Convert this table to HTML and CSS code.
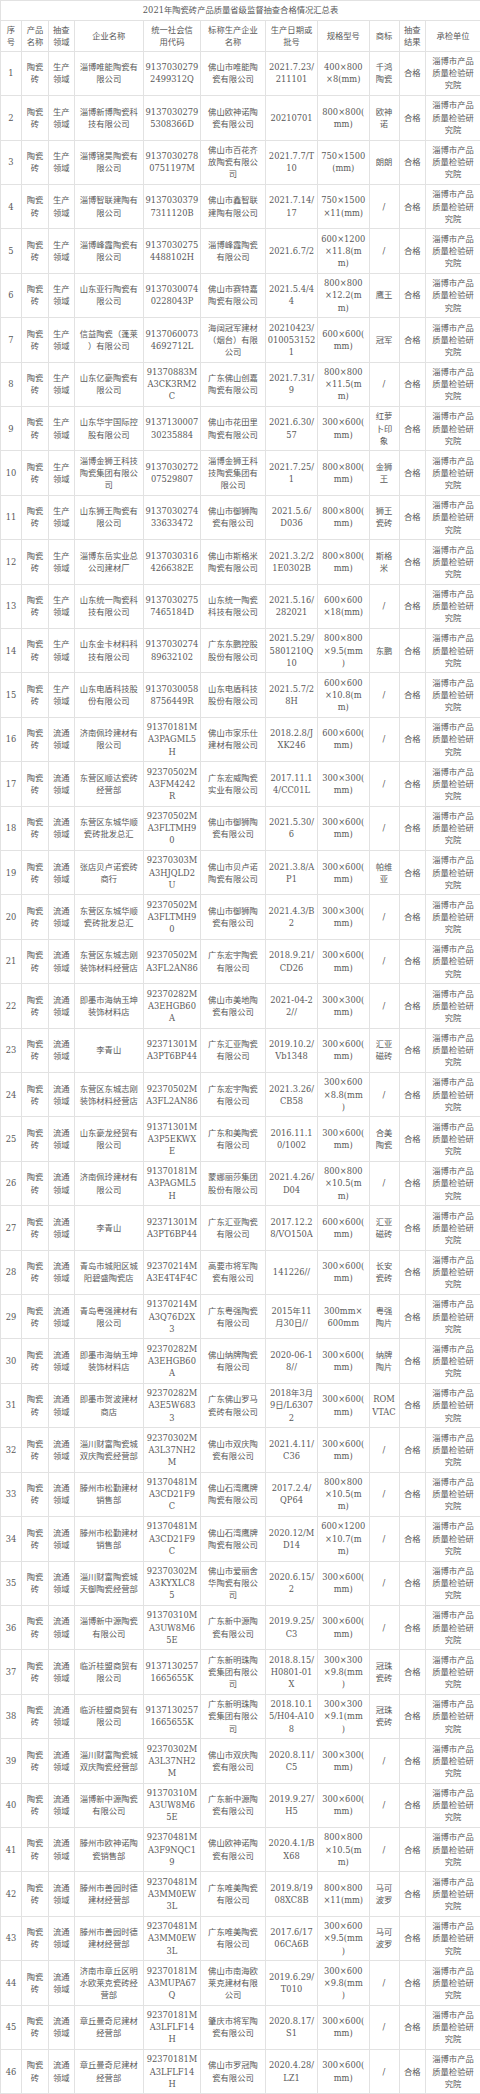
FILE: index.html
```html
<!DOCTYPE html>
<html lang="zh-CN">
<head>
<meta charset="utf-8">
<title>2021年陶瓷砖产品质量省级监督抽查合格情况汇总表</title>
<link rel="stylesheet" href="styles.css">
</head>
<body>
<table class="sheet">
<colgroup>
<col class="c1"><col class="c2"><col class="c3"><col class="c4"><col class="c5"><col class="c6"><col class="c7"><col class="c8"><col class="c9"><col class="c10"><col class="c11">
</colgroup>
<tbody>
<tr class="t"><td colspan="11">2021年陶瓷砖产品质量省级监督抽查合格情况汇总表</td></tr>
<tr class="h"><td>序<br>号</td><td>产品<br>名称</td><td>抽查<br>领域</td><td>企业名称</td><td>统一社会信<br>用代码</td><td>标称生产企业<br>名称</td><td>生产日期或<br>批号</td><td>规格型号</td><td>商标</td><td>抽查<br>结果</td><td>承检单位</td></tr>
<tr class="r"><td>1</td><td>陶瓷<br>砖</td><td>生产<br>领域</td><td>淄博唯能陶瓷有<br>限公司</td><td>9137030279<br>2499312Q</td><td>佛山市唯能陶<br>瓷有限公司</td><td>2021.7.23/<br>211101</td><td>400×800<br>×8(mm)</td><td>千鸿<br>陶瓷</td><td>合格</td><td>淄博市产品<br>质量检验研<br>究院</td></tr>
<tr class="r"><td>2</td><td>陶瓷<br>砖</td><td>生产<br>领域</td><td>淄博新博陶瓷科<br>技有限公司</td><td>9137030279<br>5308366D</td><td>佛山欧神诺陶<br>瓷有限公司</td><td>20210701</td><td>800×800(<br>mm)</td><td>欧神<br>诺</td><td>合格</td><td>淄博市产品<br>质量检验研<br>究院</td></tr>
<tr class="r"><td>3</td><td>陶瓷<br>砖</td><td>生产<br>领域</td><td>淄博锦昊陶瓷有<br>限公司</td><td>9137030278<br>0751197M</td><td>佛山市百花齐<br>放陶瓷有限公<br>司</td><td>2021.7.7/T<br>10</td><td>750×1500<br>(mm)</td><td>朗朗</td><td>合格</td><td>淄博市产品<br>质量检验研<br>究院</td></tr>
<tr class="r"><td>4</td><td>陶瓷<br>砖</td><td>生产<br>领域</td><td>淄博智联建陶有<br>限公司</td><td>9137030379<br>7311120B</td><td>佛山市鑫智联<br>建陶有限公司</td><td>2021.7.14/<br>17</td><td>750×1500<br>×11(mm)</td><td>/</td><td>合格</td><td>淄博市产品<br>质量检验研<br>究院</td></tr>
<tr class="r"><td>5</td><td>陶瓷<br>砖</td><td>生产<br>领域</td><td>淄博峰霞陶瓷有<br>限公司</td><td>9137030275<br>4488102H</td><td>淄博峰霞陶瓷<br>有限公司</td><td>2021.6.7/2</td><td>600×1200<br>×11.8(m<br>m)</td><td>/</td><td>合格</td><td>淄博市产品<br>质量检验研<br>究院</td></tr>
<tr class="r"><td>6</td><td>陶瓷<br>砖</td><td>生产<br>领域</td><td>山东亚行陶瓷有<br>限公司</td><td>9137030074<br>0228043P</td><td>佛山市赛特嘉<br>陶瓷有限公司</td><td>2021.5.4/4<br>4</td><td>800×800<br>×12.2(m<br>m)</td><td>鹰王</td><td>合格</td><td>淄博市产品<br>质量检验研<br>究院</td></tr>
<tr class="r"><td>7</td><td>陶瓷<br>砖</td><td>生产<br>领域</td><td>信益陶瓷（蓬莱<br>）有限公司</td><td>9137060073<br>4692712L</td><td>海阔冠军建材<br>（烟台）有限<br>公司</td><td>20210423/<br>010053152<br>1</td><td>600×600(<br>mm)</td><td>冠军</td><td>合格</td><td>淄博市产品<br>质量检验研<br>究院</td></tr>
<tr class="r"><td>8</td><td>陶瓷<br>砖</td><td>生产<br>领域</td><td>山东亿豪陶瓷有<br>限公司</td><td>91370883M<br>A3CK3RM2<br>C</td><td>广东佛山创嘉<br>陶瓷有限公司</td><td>2021.7.31/<br>9</td><td>800×800<br>×11.5(m<br>m)</td><td>/</td><td>合格</td><td>淄博市产品<br>质量检验研<br>究院</td></tr>
<tr class="r"><td>9</td><td>陶瓷<br>砖</td><td>生产<br>领域</td><td>山东华宇国际控<br>股有限公司</td><td>9137130007<br>30235884</td><td>佛山市花田里<br>陶瓷有限公司</td><td>2021.6.30/<br>57</td><td>300×600(<br>mm)</td><td>红萝<br>卜印<br>象</td><td>合格</td><td>淄博市产品<br>质量检验研<br>究院</td></tr>
<tr class="r"><td>10</td><td>陶瓷<br>砖</td><td>生产<br>领域</td><td>淄博金狮王科技<br>陶瓷集团有限公<br>司</td><td>9137030272<br>07529807</td><td>淄博金狮王科<br>技陶瓷集团有<br>限公司</td><td>2021.7.25/<br>1</td><td>800×800(<br>mm)</td><td>金狮<br>王</td><td>合格</td><td>淄博市产品<br>质量检验研<br>究院</td></tr>
<tr class="r"><td>11</td><td>陶瓷<br>砖</td><td>生产<br>领域</td><td>山东狮王陶瓷有<br>限公司</td><td>9137030274<br>33633472</td><td>佛山市御狮陶<br>瓷有限公司</td><td>2021.5.6/<br>D036</td><td>800×800(<br>mm)</td><td>狮王<br>瓷砖</td><td>合格</td><td>淄博市产品<br>质量检验研<br>究院</td></tr>
<tr class="r"><td>12</td><td>陶瓷<br>砖</td><td>生产<br>领域</td><td>淄博东岳实业总<br>公司建材厂</td><td>9137030316<br>4266382E</td><td>佛山市斯格米<br>陶瓷有限公司</td><td>2021.3.2/2<br>1E0302B</td><td>800×800(<br>mm)</td><td>斯格<br>米</td><td>合格</td><td>淄博市产品<br>质量检验研<br>究院</td></tr>
<tr class="r"><td>13</td><td>陶瓷<br>砖</td><td>生产<br>领域</td><td>山东统一陶瓷科<br>技有限公司</td><td>9137030275<br>7465184D</td><td>山东统一陶瓷<br>科技有限公司</td><td>2021.5.16/<br>282021</td><td>600×600<br>×18(mm)</td><td>/</td><td>合格</td><td>淄博市产品<br>质量检验研<br>究院</td></tr>
<tr class="r"><td>14</td><td>陶瓷<br>砖</td><td>生产<br>领域</td><td>山东金卡材料科<br>技有限公司</td><td>9137030274<br>89632102</td><td>广东东鹏控股<br>股份有限公司</td><td>2021.5.29/<br>5801210Q<br>10</td><td>800×800<br>×9.5(mm<br>)</td><td>东鹏</td><td>合格</td><td>淄博市产品<br>质量检验研<br>究院</td></tr>
<tr class="r"><td>15</td><td>陶瓷<br>砖</td><td>生产<br>领域</td><td>山东电盾科技股<br>份有限公司</td><td>9137030058<br>8756449R</td><td>山东电盾科技<br>股份有限公司</td><td>2021.5.7/2<br>8H</td><td>600×600<br>×10.8(m<br>m)</td><td>/</td><td>合格</td><td>淄博市产品<br>质量检验研<br>究院</td></tr>
<tr class="r"><td>16</td><td>陶瓷<br>砖</td><td>流通<br>领域</td><td>济南佩玲建材有<br>限公司</td><td>91370181M<br>A3PAGML5<br>H</td><td>佛山市家乐仕<br>建材有限公司</td><td>2018.2.8/J<br>XK246</td><td>600×600(<br>mm)</td><td>/</td><td>合格</td><td>淄博市产品<br>质量检验研<br>究院</td></tr>
<tr class="r"><td>17</td><td>陶瓷<br>砖</td><td>流通<br>领域</td><td>东营区顺达瓷砖<br>经营部</td><td>92370502M<br>A3FM4242<br>R</td><td>广东宏威陶瓷<br>实业有限公司</td><td>2017.11.1<br>4/CC01L</td><td>300×300(<br>mm)</td><td>/</td><td>合格</td><td>淄博市产品<br>质量检验研<br>究院</td></tr>
<tr class="r"><td>18</td><td>陶瓷<br>砖</td><td>流通<br>领域</td><td>东营区东城华顺<br>瓷砖批发总汇</td><td>92370502M<br>A3FLTMH9<br>0</td><td>佛山市御狮陶<br>瓷有限公司</td><td>2021.5.30/<br>6</td><td>300×600(<br>mm)</td><td>/</td><td>合格</td><td>淄博市产品<br>质量检验研<br>究院</td></tr>
<tr class="r"><td>19</td><td>陶瓷<br>砖</td><td>流通<br>领域</td><td>张店贝卢诺瓷砖<br>商行</td><td>92370303M<br>A3HJQLD2<br>U</td><td>佛山市贝卢诺<br>陶瓷有限公司</td><td>2021.3.8/A<br>P1</td><td>300×600(<br>mm)</td><td>帕维<br>亚</td><td>合格</td><td>淄博市产品<br>质量检验研<br>究院</td></tr>
<tr class="r"><td>20</td><td>陶瓷<br>砖</td><td>流通<br>领域</td><td>东营区东城华顺<br>瓷砖批发总汇</td><td>92370502M<br>A3FLTMH9<br>0</td><td>佛山市御狮陶<br>瓷有限公司</td><td>2021.4.3/B<br>2</td><td>300×300(<br>mm)</td><td>/</td><td>合格</td><td>淄博市产品<br>质量检验研<br>究院</td></tr>
<tr class="r"><td>21</td><td>陶瓷<br>砖</td><td>流通<br>领域</td><td>东营区东城志刚<br>装饰材料经营店</td><td>92370502M<br>A3FL2AN86</td><td>广东宏宇陶瓷<br>有限公司</td><td>2018.9.21/<br>CD26</td><td>300×600(<br>mm)</td><td>/</td><td>合格</td><td>淄博市产品<br>质量检验研<br>究院</td></tr>
<tr class="r"><td>22</td><td>陶瓷<br>砖</td><td>流通<br>领域</td><td>即墨市海纳玉坤<br>装饰材料店</td><td>92370282M<br>A3EHGB60<br>A</td><td>佛山市美地陶<br>瓷有限公司</td><td>2021-04-2<br>2//</td><td>300×300(<br>mm)</td><td>/</td><td>合格</td><td>淄博市产品<br>质量检验研<br>究院</td></tr>
<tr class="r"><td>23</td><td>陶瓷<br>砖</td><td>流通<br>领域</td><td>李青山</td><td>92371301M<br>A3PT6BP44</td><td>广东汇亚陶瓷<br>有限公司</td><td>2019.10.2/<br>Vb1348</td><td>300×600(<br>mm)</td><td>汇亚<br>磁砖</td><td>合格</td><td>淄博市产品<br>质量检验研<br>究院</td></tr>
<tr class="r"><td>24</td><td>陶瓷<br>砖</td><td>流通<br>领域</td><td>东营区东城志刚<br>装饰材料经营店</td><td>92370502M<br>A3FL2AN86</td><td>广东宏宇陶瓷<br>有限公司</td><td>2021.3.26/<br>CB58</td><td>300×600<br>×8.8(mm<br>)</td><td>/</td><td>合格</td><td>淄博市产品<br>质量检验研<br>究院</td></tr>
<tr class="r"><td>25</td><td>陶瓷<br>砖</td><td>流通<br>领域</td><td>山东豪龙经贸有<br>限公司</td><td>91371301M<br>A3P5EKWX<br>E</td><td>广东和美陶瓷<br>有限公司</td><td>2016.11.1<br>0/1002</td><td>300×600(<br>mm)</td><td>合美<br>陶瓷</td><td>合格</td><td>淄博市产品<br>质量检验研<br>究院</td></tr>
<tr class="r"><td>26</td><td>陶瓷<br>砖</td><td>流通<br>领域</td><td>济南佩玲建材有<br>限公司</td><td>91370181M<br>A3PAGML5<br>H</td><td>蒙娜丽莎集团<br>股份有限公司</td><td>2021.4.26/<br>D04</td><td>800×800<br>×10.5(m<br>m)</td><td>/</td><td>合格</td><td>淄博市产品<br>质量检验研<br>究院</td></tr>
<tr class="r"><td>27</td><td>陶瓷<br>砖</td><td>流通<br>领域</td><td>李青山</td><td>92371301M<br>A3PT6BP44</td><td>广东汇亚陶瓷<br>有限公司</td><td>2017.12.2<br>8/VO150A</td><td>600×600(<br>mm)</td><td>汇亚<br>磁砖</td><td>合格</td><td>淄博市产品<br>质量检验研<br>究院</td></tr>
<tr class="r"><td>28</td><td>陶瓷<br>砖</td><td>流通<br>领域</td><td>青岛市城阳区城<br>阳碧盛陶瓷店</td><td>92370214M<br>A3E4T4F4C</td><td>高要市将军陶<br>瓷有限公司</td><td>141226//</td><td>300×600(<br>mm)</td><td>长安<br>瓷砖</td><td>合格</td><td>淄博市产品<br>质量检验研<br>究院</td></tr>
<tr class="r"><td>29</td><td>陶瓷<br>砖</td><td>流通<br>领域</td><td>青岛粤强建材有<br>限公司</td><td>91370214M<br>A3Q76D2X<br>3</td><td>广东粤强陶瓷<br>有限公司</td><td>2015年11<br>月30日//</td><td>300mm×<br>600mm</td><td>粤强<br>陶片</td><td>合格</td><td>淄博市产品<br>质量检验研<br>究院</td></tr>
<tr class="r"><td>30</td><td>陶瓷<br>砖</td><td>流通<br>领域</td><td>即墨市海纳玉坤<br>装饰材料店</td><td>92370282M<br>A3EHGB60<br>A</td><td>佛山纳牌陶瓷<br>有限公司</td><td>2020-06-1<br>8//</td><td>300×600(<br>mm)</td><td>纳牌<br>陶片</td><td>合格</td><td>淄博市产品<br>质量检验研<br>究院</td></tr>
<tr class="r"><td>31</td><td>陶瓷<br>砖</td><td>流通<br>领域</td><td>即墨市贺波建材<br>商店</td><td>92370282M<br>A3E5W683<br>3</td><td>广东佛山罗马<br>瓷砖有限公司</td><td>2018年3月<br>9日/L6307<br>2</td><td>300×600(<br>mm)</td><td>ROM<br>VTAC</td><td>合格</td><td>淄博市产品<br>质量检验研<br>究院</td></tr>
<tr class="r"><td>32</td><td>陶瓷<br>砖</td><td>流通<br>领域</td><td>淄川财富陶瓷城<br>双庆陶瓷经营部</td><td>92370302M<br>A3L37NH2<br>M</td><td>佛山市双庆陶<br>瓷有限公司</td><td>2021.4.11/<br>C36</td><td>300×600(<br>mm)</td><td>/</td><td>合格</td><td>淄博市产品<br>质量检验研<br>究院</td></tr>
<tr class="r"><td>33</td><td>陶瓷<br>砖</td><td>流通<br>领域</td><td>滕州市松勤建材<br>销售部</td><td>91370481M<br>A3CD21F9<br>C</td><td>佛山石湾鹰牌<br>陶瓷有限公司</td><td>2017.2.4/<br>QP64</td><td>800×800<br>×10.5(m<br>m)</td><td>/</td><td>合格</td><td>淄博市产品<br>质量检验研<br>究院</td></tr>
<tr class="r"><td>34</td><td>陶瓷<br>砖</td><td>流通<br>领域</td><td>滕州市松勤建材<br>销售部</td><td>91370481M<br>A3CD21F9<br>C</td><td>佛山石湾鹰牌<br>陶瓷有限公司</td><td>2020.12/M<br>D14</td><td>600×1200<br>×10.7(m<br>m)</td><td>/</td><td>合格</td><td>淄博市产品<br>质量检验研<br>究院</td></tr>
<tr class="r"><td>35</td><td>陶瓷<br>砖</td><td>流通<br>领域</td><td>淄川财富陶瓷城<br>天御陶瓷经营部</td><td>92370302M<br>A3KYXLC8<br>5</td><td>佛山市爱丽舍<br>华陶瓷有限公<br>司</td><td>2020.6.15/<br>2</td><td>300×600(<br>mm)</td><td>/</td><td>合格</td><td>淄博市产品<br>质量检验研<br>究院</td></tr>
<tr class="r"><td>36</td><td>陶瓷<br>砖</td><td>流通<br>领域</td><td>淄博新中源陶瓷<br>有限公司</td><td>91370310M<br>A3UW8M6<br>5E</td><td>广东新中源陶<br>瓷有限公司</td><td>2019.9.25/<br>C3</td><td>300×600(<br>mm)</td><td>/</td><td>合格</td><td>淄博市产品<br>质量检验研<br>究院</td></tr>
<tr class="r"><td>37</td><td>陶瓷<br>砖</td><td>流通<br>领域</td><td>临沂桂盟商贸有<br>限公司</td><td>9137130257<br>1665655K</td><td>广东新明珠陶<br>瓷集团有限公<br>司</td><td>2018.8.15/<br>H0801-01<br>X</td><td>300×300<br>×9.8(mm<br>)</td><td>冠珠<br>瓷砖</td><td>合格</td><td>淄博市产品<br>质量检验研<br>究院</td></tr>
<tr class="r"><td>38</td><td>陶瓷<br>砖</td><td>流通<br>领域</td><td>临沂桂盟商贸有<br>限公司</td><td>9137130257<br>1665655K</td><td>广东新明珠陶<br>瓷集团有限公<br>司</td><td>2018.10.1<br>5/H04-A10<br>8</td><td>300×300<br>×9.1(mm<br>)</td><td>冠珠<br>瓷砖</td><td>合格</td><td>淄博市产品<br>质量检验研<br>究院</td></tr>
<tr class="r"><td>39</td><td>陶瓷<br>砖</td><td>流通<br>领域</td><td>淄川财富陶瓷城<br>双庆陶瓷经营部</td><td>92370302M<br>A3L37NH2<br>M</td><td>佛山市双庆陶<br>瓷有限公司</td><td>2020.8.11/<br>C5</td><td>300×300(<br>mm)</td><td>/</td><td>合格</td><td>淄博市产品<br>质量检验研<br>究院</td></tr>
<tr class="r"><td>40</td><td>陶瓷<br>砖</td><td>流通<br>领域</td><td>淄博新中源陶瓷<br>有限公司</td><td>91370310M<br>A3UW8M6<br>5E</td><td>广东新中源陶<br>瓷有限公司</td><td>2019.9.27/<br>H5</td><td>300×600(<br>mm)</td><td>/</td><td>合格</td><td>淄博市产品<br>质量检验研<br>究院</td></tr>
<tr class="r"><td>41</td><td>陶瓷<br>砖</td><td>流通<br>领域</td><td>滕州市欧神诺陶<br>瓷销售部</td><td>92370481M<br>A3F9NQC1<br>9</td><td>佛山欧神诺陶<br>瓷有限公司</td><td>2020.4.1/B<br>X68</td><td>800×800<br>×10.5(m<br>m)</td><td>/</td><td>合格</td><td>淄博市产品<br>质量检验研<br>究院</td></tr>
<tr class="r"><td>42</td><td>陶瓷<br>砖</td><td>流通<br>领域</td><td>滕州市善园时德<br>建材经营部</td><td>92370481M<br>A3MM0EW<br>3L</td><td>广东唯美陶瓷<br>有限公司</td><td>2019.8/19<br>08XC8B</td><td>800×800<br>×11(mm)</td><td>马可<br>波罗</td><td>合格</td><td>淄博市产品<br>质量检验研<br>究院</td></tr>
<tr class="r"><td>43</td><td>陶瓷<br>砖</td><td>流通<br>领域</td><td>滕州市善园时德<br>建材经营部</td><td>92370481M<br>A3MM0EW<br>3L</td><td>广东唯美陶瓷<br>有限公司</td><td>2017.6/17<br>06CA6B</td><td>300×600<br>×9.5(mm<br>)</td><td>马可<br>波罗</td><td>合格</td><td>淄博市产品<br>质量检验研<br>究院</td></tr>
<tr class="r"><td>44</td><td>陶瓷<br>砖</td><td>流通<br>领域</td><td>济南市章丘区明<br>水欧莱克瓷砖经<br>营部</td><td>92370181M<br>A3MUPA67<br>Q</td><td>佛山市南海欧<br>莱克建材有限<br>公司</td><td>2019.6.29/<br>T010</td><td>300×600<br>×9.8(mm<br>)</td><td>/</td><td>合格</td><td>淄博市产品<br>质量检验研<br>究院</td></tr>
<tr class="r"><td>45</td><td>陶瓷<br>砖</td><td>流通<br>领域</td><td>章丘曼奇尼建材<br>经营部</td><td>92370181M<br>A3LFLF14<br>H</td><td>肇庆市将军陶<br>瓷有限公司</td><td>2020.8.17/<br>S1</td><td>300×600(<br>mm)</td><td>/</td><td>合格</td><td>淄博市产品<br>质量检验研<br>究院</td></tr>
<tr class="r"><td>46</td><td>陶瓷<br>砖</td><td>流通<br>领域</td><td>章丘曼奇尼建材<br>经营部</td><td>92370181M<br>A3LFLF14<br>H</td><td>佛山市罗冠陶<br>瓷有限公司</td><td>2020.4.28/<br>LZ1</td><td>300×600(<br>mm)</td><td>/</td><td>合格</td><td>淄博市产品<br>质量检验研<br>究院</td></tr>
</tbody>
</table>
</body>
</html>
```

FILE: styles.css
```css
html, body {
  margin: 0;
  padding: 0;
  background: #ffffff;
}

.sheet {
  width: 480px;
  border-collapse: collapse;
  table-layout: fixed;
  font-family: "DejaVu Serif", "Noto Sans CJK SC", serif;
  font-size: 8.3px;
  line-height: 12.2px;
  color: #595959;
}

.sheet td {
  border: 1px solid #e2e2e2;
  padding: 0 1px;
  text-align: center;
  vertical-align: middle;
  white-space: nowrap;
  overflow: hidden;
}

.c1 { width: 21px; }
.c2 { width: 27px; }
.c3 { width: 25.5px; }
.c4 { width: 69.5px; }
.c5 { width: 57px; }
.c6 { width: 65px; }
.c7 { width: 52px; }
.c8 { width: 51.5px; }
.c9 { width: 30px; }
.c10 { width: 26.5px; }
.c11 { width: 55px; }

.t { height: 20px; }
.h { height: 30.7px; }
.r { height: 44.42px; }
```
